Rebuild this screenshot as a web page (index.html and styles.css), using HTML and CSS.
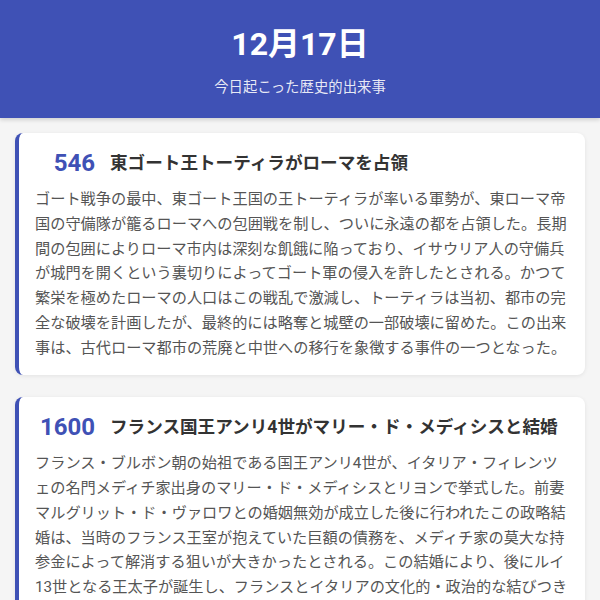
FILE: index.html
```html
<!DOCTYPE html>
<html lang="ja">
<head>
<meta charset="utf-8">
<title>12月17日</title>
<link rel="stylesheet" href="styles.css">
</head>
<body>
<header class="hero">
  <h1 class="hero-title">12月17日</h1>
  <p class="hero-sub">今日起こった歴史的出来事</p>
</header>
<main class="list">
  <article class="card">
    <div class="card-head">
      <span class="year">546</span>
      <h2 class="card-title">東ゴート王トーティラがローマを占領</h2>
    </div>
    <p class="card-body">ゴート戦争の最中、東ゴート王国の王トーティラが率いる軍勢が、東ローマ帝国の守備隊が籠るローマへの包囲戦を制し、ついに永遠の都を占領した。長期間の包囲によりローマ市内は深刻な飢餓に陥っており、イサウリア人の守備兵が城門を開くという裏切りによってゴート軍の侵入を許したとされる。かつて繁栄を極めたローマの人口はこの戦乱で激減し、トーティラは当初、都市の完全な破壊を計画したが、最終的には略奪と城壁の一部破壊に留めた。この出来事は、古代ローマ都市の荒廃と中世への移行を象徴する事件の一つとなった。</p>
  </article>
  <article class="card">
    <div class="card-head">
      <span class="year">1600</span>
      <h2 class="card-title">フランス国王アンリ4世がマリー・ド・メディシスと結婚</h2>
    </div>
    <p class="card-body">フランス・ブルボン朝の始祖である国王アンリ4世が、イタリア・フィレンツェの名門メディチ家出身のマリー・ド・メディシスとリヨンで挙式した。前妻マルグリット・ド・ヴァロワとの婚姻無効が成立した後に行われたこの政略結婚は、当時のフランス王室が抱えていた巨額の債務を、メディチ家の莫大な持参金によって解消する狙いが大きかったとされる。この結婚により、後にルイ13世となる王太子が誕生し、フランスとイタリアの文化的・政治的な結びつきがいっそう強まることとなった。</p>
  </article>
</main>
</body>
</html>
```
FILE: styles.css
```css
* { box-sizing: border-box; }
html, body { margin: 0; padding: 0; }
body {
  background: #f5f5f5;
  font-family: Roboto, "Noto Sans CJK JP", sans-serif;
  color: #333;
}
.hero {
  background: #3f51b5;
  color: #fff;
  text-align: center;
  padding: 25px 16px 20px;
  box-shadow: 0 2px 4px rgba(0,0,0,0.15);
}
.hero-title {
  margin: 0;
  font-size: 32px;
  font-weight: 700;
  line-height: 38px;
}
.hero-sub {
  margin: 14px 0 0;
  font-size: 14.4px;
  line-height: 21px;
  color: rgba(255,255,255,0.88);
}
.list {
  padding: 15px 15px;
  display: flex;
  flex-direction: column;
  gap: 22px;
}
.card {
  background: #fff;
  border-left: 4px solid #3f51b5;
  border-radius: 8px;
  box-shadow: 0 1px 4px rgba(0,0,0,0.08);
  padding: 16px 16px 15px;
}
.card-head {
  display: flex;
  align-items: center;
  gap: 15px;
  margin-bottom: 10px;
}
.year {
  width: 60px;
  flex: none;
  text-align: right;
  font-size: 24px;
  font-weight: 700;
  color: #3f51b5;
  line-height: 28px;
}
.card-title {
  margin: 0;
  font-size: 17.6px;
  font-weight: 700;
  color: #333;
  line-height: 26px;
}
.card-body {
  margin: 0;
  font-size: 15.2px;
  line-height: 1.63;
  color: #555;
}
```
